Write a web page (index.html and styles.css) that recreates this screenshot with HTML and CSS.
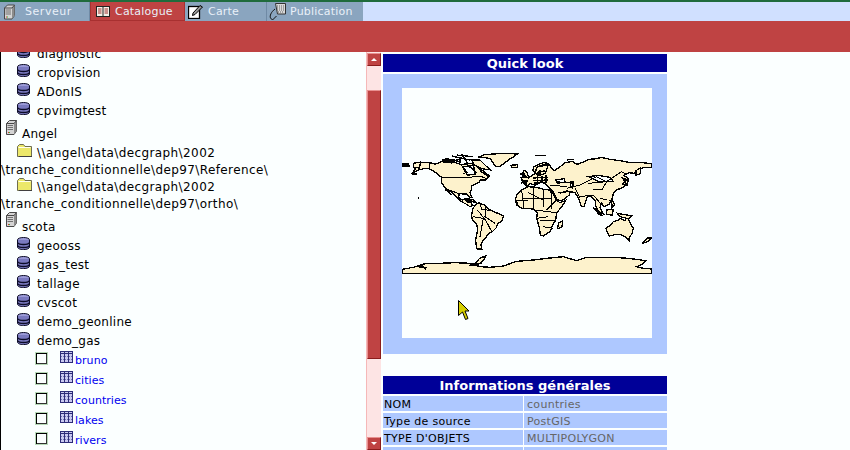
FILE: index.html
```html
<!DOCTYPE html>
<html lang="fr">
<head>
<meta charset="utf-8">
<title>Catalogue</title>
<link rel="stylesheet" href="styles.css">
</head>
<body>
<svg class="defs" width="0" height="0">
  <symbol id="db" viewBox="0 0 13 13">
    <ellipse cx="6.5" cy="2.8" rx="6" ry="2.3" fill="#9a9ad8" stroke="#0c0c28"/>
    <path d="M.5 3v7c0 1.500 2.600 2.600 6 2.600s6-1.100 6-2.600V3" fill="#7a7ac0" stroke="#0c0c28"/>
    <path d="M.5 5.500c1 1.500 3 2 6 2s5-.5 6-2M.5 8.500c1 1.500 3 2 6 2s5-.5 6-2" fill="none" stroke="#0c0c28" stroke-width="1.300"/>
  </symbol>
  <symbol id="server" viewBox="0 0 11 15">
    <path d="M.5 3.500L3.500.5h7v10.500L8 14.500H.5z" fill="#d4d4d4" stroke="#484848"/>
    <path d="M8 3.500v11l2.500-3.500V.5z" fill="#8c8c8c"/>
    <path d="M.5 3.500h7.500l2.500-3" fill="none" stroke="#484848"/>
    <path d="M1.500 5.500h5.500M1.500 7.500h5.500M1.500 9.500h5.500" stroke="#707070"/>
    <path d="M2 12.500h1" stroke="#e03030"/>
    <path d="M3 12.500h1" stroke="#30c030"/>
  </symbol>
  <symbol id="folder" viewBox="0 0 15 13">
    <path d="M.5 12.500V2.500l2-2h4l1.500 2h6.500v10z" fill="#ece86a" stroke="#6e6e50"/>
    <path d="M1.500 3.500h12" stroke="#fffff0"/>
    <path d="M2 12.500h13.500" stroke="#404040"/>
  </symbol>
  <symbol id="table" viewBox="0 0 13 12">
    <rect x=".5" y=".5" width="12" height="11" fill="#c8c8f0" stroke="#2c2c78"/>
    <path d="M.5 2.500h12M4.500 .5v11M8.500 .5v11" stroke="#2c2c78"/>
    <path d="M1 5.500h11M1 8.500h11" stroke="#7070b0" stroke-dasharray="1 1"/>
  </symbol>
</svg>

<div class="topline"></div>
<nav class="tabs">
  <a class="tab tab-serveur">
    <svg class="tab-icon" width="11" height="16"><use href="#server"/></svg>
    <span>Serveur</span>
  </a>
  <a class="tab tab-catalogue active">
    <svg class="tab-icon" width="14" height="11" viewBox="0 0 14 11">
      <rect x=".5" y=".5" width="13" height="10" fill="#f4f0e8" stroke="#222"/>
      <path d="M7 .5v10" stroke="#222"/>
      <path d="M2 3h3.500M2 5h3.500M2 7h3.500M8.500 3h3.500M8.500 5h3.500M8.500 7h3.500" stroke="#a03030"/>
    </svg>
    <span>Catalogue</span>
  </a>
  <a class="tab tab-carte">
    <svg class="tab-icon" width="16" height="15" viewBox="0 0 16 15">
      <rect x=".5" y="2.500" width="11" height="12" fill="#fff" stroke="#000" stroke-width="1.300"/>
      <path d="M5 9l7-7.500 2.500 1.500-7.500 7.500-2.500 1z" fill="#999" stroke="#000"/>
    </svg>
    <span>Carte</span>
  </a>
  <a class="tab tab-pub">
    <svg class="tab-icon" width="17" height="18" viewBox="0 0 17 18">
      <path d="M6.500.5h10v10.500h-8z" fill="#d8d8d8" stroke="#333"/>
      <path d="M8 3h7M8 5h7M8 7h7M9 9h6" stroke="#666" stroke-dasharray="1 1"/>
      <path d="M6 6C2 9 .5 13 1.500 15l2 2 4-4" fill="none" stroke="#111"/>
    </svg>
    <span>Publication</span>
  </a>
  <div class="tabs-rest"></div>
</nav>
<div class="redbar"></div>

<main class="main">
  <section class="tree">
    <div class="tree-inner">
      <div class="row db"><svg class="ic-db" width="13" height="13"><use href="#db"/></svg><span>diagnostic</span></div>
      <div class="row db"><svg class="ic-db" width="13" height="13"><use href="#db"/></svg><span>cropvision</span></div>
      <div class="row db"><svg class="ic-db" width="13" height="13"><use href="#db"/></svg><span>ADonIS</span></div>
      <div class="row db"><svg class="ic-db" width="13" height="13"><use href="#db"/></svg><span>cpvimgtest</span></div>
      <div class="row srv srv-a"><svg class="ic-srv" width="11" height="15"><use href="#server"/></svg><span>Angel</span></div>
      <div class="path"><svg class="ic-folder" width="15" height="13"><use href="#folder"/></svg>\\angel\data\decgraph\2002<br>\tranche_conditionnelle\dep97\Reference\</div>
      <div class="path"><svg class="ic-folder" width="15" height="13"><use href="#folder"/></svg>\\angel\data\decgraph\2002<br>\tranche_conditionnelle\dep97\ortho\</div>
      <div class="row srv srv-s"><svg class="ic-srv" width="11" height="15"><use href="#server"/></svg><span>scota</span></div>
      <div class="row db"><svg class="ic-db" width="13" height="13"><use href="#db"/></svg><span>geooss</span></div>
      <div class="row db"><svg class="ic-db" width="13" height="13"><use href="#db"/></svg><span>gas_test</span></div>
      <div class="row db"><svg class="ic-db" width="13" height="13"><use href="#db"/></svg><span>tallage</span></div>
      <div class="row db"><svg class="ic-db" width="13" height="13"><use href="#db"/></svg><span>cvscot</span></div>
      <div class="row db"><svg class="ic-db" width="13" height="13"><use href="#db"/></svg><span>demo_geonline</span></div>
      <div class="row db"><svg class="ic-db" width="13" height="13"><use href="#db"/></svg><span>demo_gas</span></div>
      <div class="row layer"><span class="check"></span><svg class="ic-table" width="13" height="12"><use href="#table"/></svg><a class="layer-link">bruno</a></div>
      <div class="row layer"><span class="check"></span><svg class="ic-table" width="13" height="12"><use href="#table"/></svg><a class="layer-link">cities</a></div>
      <div class="row layer"><span class="check"></span><svg class="ic-table" width="13" height="12"><use href="#table"/></svg><a class="layer-link">countries</a></div>
      <div class="row layer"><span class="check"></span><svg class="ic-table" width="13" height="12"><use href="#table"/></svg><a class="layer-link">lakes</a></div>
      <div class="row layer"><span class="check"></span><svg class="ic-table" width="13" height="12"><use href="#table"/></svg><a class="layer-link">rivers</a></div>
    </div>
  </section>

  <div class="scrollbar">
    <div class="sb-btn"><span class="arrow-up"></span></div>
    <div class="sb-track"><div class="sb-thumb"></div></div>
    <div class="sb-btn"><span class="arrow-down"></span></div>
  </div>

  <section class="details">
    <h2 class="head">Quick look</h2>
    <div class="look">
      <div class="map">
        <svg class="world" width="250" height="250" viewBox="66 -186 750 750">
          <g class="land">
            <path d="M100 40L125 37 148 38 165 42 180 38 190 30 205 38 222 36 245 45 262 40 280 42 292 50 300 58 312 64 320 72 330 78 322 84 316 90 302 90 296 98 288 102 274 108 274 120 270 128 276 142 268 142 260 132 248 132 238 130 236 142 246 150 258 146 262 156 272 156 278 166 270 170 258 162 246 156 236 148 226 136 214 126 200 118 190 106 184 96 185 82 172 72 160 62 145 56 130 56 110 62 94 72 106 58 100 50Z"/>
            <path d="M278 178L285 166 296 158 310 164 318 168 325 176 335 182 348 188 360 192 371 198 366 212 352 222 350 232 338 244 325 252 318 262 308 272 303 284 306 298 292 298 288 284 287 268 291 250 293 236 290 224 278 210 274 198Z"/>
            <path d="M295 22L312 14 340 12 376 10 412 12 398 22 385 30 370 42 358 50 345 48 338 36 330 26 310 22Z"/>
            <path d="M428 96L424 84 434 82 446 84 456 76 466 70 458 60 462 50 474 44 490 38 504 40 512 50 522 62 532 56 546 46 556 38 576 34 590 42 606 38 626 28 650 26 664 22 690 28 720 32 750 38 790 38 815 42 815 52 792 52 772 60 762 70 746 68 732 76 746 86 742 100 726 114 708 120 700 130 696 150 686 164 672 170 665 160 660 172 668 190 660 190 648 170 645 150 632 138 622 140 612 170 604 168 596 146 585 128 570 125 568 135 546 152 532 150 520 125 506 112 496 100 482 96 466 106 450 100 440 110Z"/>
            <path d="M406 150L410 135 425 120 445 110 470 112 490 118 510 120 518 128 528 150 540 158 556 152 546 170 530 188 527 210 518 225 510 245 490 258 481 255 478 232 470 205 472 188 462 178 445 175 425 175 410 165Z"/>
            <path d="M678 235L690 226 700 215 715 210 722 205 735 212 742 200 750 218 760 235 756 252 750 258 748 272 738 262 722 254 704 254 688 258 682 248Z"/>
            <path d="M66 358L100 352 135 341 180 340 225 338 270 340 300 350 330 352 370 348 410 334 460 330 500 325 550 320 590 332 620 322 660 322 700 322 745 325 797 332 788 342 770 350 790 355 815 357 815 370 66 370Z"/>
            <path d="M268 347L285 340 298 326 318 317 312 330 300 340Z"/>
            <path d="M533 236L535 220 548 212 546 230Z"/>
            <path d="M787 280L803 264 815 264 804 274Z"/>
            <path d="M768 62L780 54 782 70 768 76Z"/>
            <path d="M432 62L440 64 446 82 428 80Z"/>
            <path d="M392 46L413 44 412 52 396 52Z"/>
            <path d="M66 42L85 42 88 48 66 48Z"/>
            <path d="M100 40L122 36 118 54 100 52Z"/>
            <path d="M262 146L280 150 292 160 272 152Z"/>
            <path d="M640 172L668 198 656 192Z"/>
            <path d="M680 180L700 178 696 196 680 192Z"/>
            <path d="M712 190L756 198 745 206 720 200Z"/>
            <path d="M694 145L704 165 696 174Z"/>
            <path d="M728 102L742 88 742 106Z"/>
            <path d="M276 32L300 30 318 48 332 60 306 56 284 46Z"/>
            <path d="M470 52L490 44 504 46 496 70 478 76 466 70Z"/>
            <path class="water" d="M248 50L280 46 286 72 262 76Z"/>
            <path class="water" d="M528 90L552 86 556 96 532 100Z"/>
            <path class="water" d="M572 96L580 96 578 114 572 110Z"/>
            <path class="water" d="M625 80L655 76 690 82 700 94 660 96Z"/>
          </g>
          <g class="borders">
            <path d="M185 82H270L300 78 318 85M198 117L240 132M148 38V58M245 46L262 68 248 70M190 30L215 40"/>
            <path d="M292 180L318 212 335 245M318 168L315 200 345 220M278 200L310 205 300 260M300 160L305 178 335 182"/>
            <path d="M425 120L432 174M460 110L460 178M490 118L490 172M515 124L515 178M425 145H515M465 180L530 188M478 210L525 212M488 230L520 235M530 150L500 180M445 128L490 150M406 150L445 152M470 205L505 200"/>
            <path d="M510 105L560 110M560 115L600 105 610 100 650 80 680 95 725 65 742 75M625 100L680 95 665 120 640 118M600 140L640 135M585 115L600 145M640 135L665 165M660 145L680 150M540 130L565 120M530 95L580 100M570 125L535 128"/>
          </g>
          <g class="dense">
            <path d="M185 30H225M195 25L240 35M230 15L280 20M245 12L262 38M262 28L300 30M255 40L275 55M205 35L240 28M215 18L270 30M240 22V40M190 36H215"/>
            <path d="M270 48L290 70M300 62L325 80M195 118L215 135M255 150L285 155"/>
            <path d="M470 70L495 62M480 50L505 42M428 66L440 82M510 125L518 130M460 178L475 190M424 100L440 90M420 72H436"/>
            <path d="M640 175L675 195M690 150L700 170M725 80L740 105M466 17H498M560 30L582 28M590 44L605 38M96 72H110M735 85V100"/>
            <path d="M280 345L305 340M110 350L140 352M335 350H355M120 342L138 358"/>
            <path d="M408 150L414 168M744 266L750 272M290 296H304M116 142V146"/>
            <path d="M458 84L504 82M460 92L504 90M462 99L500 98M472 76V100M486 78V100M498 76V98"/>
          </g>
          <path class="mass" d="M476 60L484 58 482 76 474 76Z"/>
          <path class="mass" d="M425 92L444 90 440 108 428 102Z"/>
          <path class="outline" d="M66 370H815V357"/>
        </svg>
        <svg class="cursor" width="12" height="20" viewBox="0 0 12 20">
          <path d="M.5.5L11 11H7L10 18.500 7.500 19.500 4.500 12 .5 15.500Z" fill="#d6cf00" stroke="#000"/>
        </svg>
      </div>
    </div>

    <h2 class="head head-info">Informations générales</h2>
    <div class="info">
      <div class="cell">NOM</div><div class="cell val">countries</div>
      <div class="cell">Type de source</div><div class="cell val">PostGIS</div>
      <div class="cell">TYPE D'OBJETS</div><div class="cell val">MULTIPOLYGON</div>
      <div class="cell"></div><div class="cell val"></div>
    </div>
  </section>
</main>
</body>
</html>
```
FILE: styles.css
```css
* { box-sizing: border-box; }
html, body { margin: 0; padding: 0; }
body {
  width: 850px;
  height: 450px;
  overflow: hidden;
  background: #fbffff;
  font-family: "DejaVu Sans", Verdana, sans-serif;
  font-size: 12px;
  color: #000;
  display: flex;
  flex-direction: column;
}
.defs { position: absolute; }

.topline { height: 2px; background: #1f6b3c; flex: none; }
.tabs { height: 19px; display: flex; flex: none; background: #d0e0ff; }
.tab {
  display: flex;
  align-items: center;
  color: #e9f0f8;
  background: #8aa5bf;
  font-size: 11px;
  letter-spacing: .2px;
  border-right: 1px solid #6f8aa5;
}
.tab.active { background: #bf4343; border: 1px solid #a83030; border-top: 0; }
.tab-serveur { width: 90px; padding-left: 4px; letter-spacing: .55px; }
.tab-catalogue { width: 95px; padding-left: 5px; }
.tab-carte { width: 82px; padding-left: 3px; }
.tab-pub { width: 96px; padding-left: 2px; border-right: 0; }
.tab-serveur .tab-icon { margin-right: 10px; }
.tab-catalogue .tab-icon { margin-right: 5px; }
.tab-carte .tab-icon { margin-right: 4px; }
.tab-pub .tab-icon { margin-right: 4px; }
.tabs-rest { flex: 1; }

.redbar { height: 31px; background: #bf4343; flex: none; }

.main { flex: 1; display: flex; min-height: 0; }
.tree {
  width: 366px;
  flex: none;
  overflow: hidden;
  border-left: 1px solid #000;
  letter-spacing: .25px;
}
.tree-inner { margin-top: -8px; }

.row { display: flex; }
.row span, .row a { line-height: 1; }
.db { height: 18.86px; padding-left: 16px; align-items: center; }
.db span { padding-top: 2px; }
.ic-db { margin-top: -3px; margin-right: 7px; flex: none; }
.srv { padding-left: 5px; align-items: flex-end; }
.srv-a { height: 24px; padding-bottom: 3px; }
.srv-s { height: 24.5px; padding-bottom: 3px; }
.ic-srv { margin-right: 5px; flex: none; align-self: flex-start; margin-top: .5px; }
.path { height: 34px; line-height: 17px; white-space: nowrap; padding-top: 1px; letter-spacing: .4px; }
.ic-folder { margin-left: 16px; margin-right: 5px; vertical-align: 0; }
.layer { height: 20px; padding-left: 34px; align-items: center; font-size: 11px; letter-spacing: .05px; }
.layer .layer-link { color: #0000f0; padding-top: 2px; padding-left: 1px; }
.check {
  width: 13px;
  height: 13px;
  flex: none;
  margin-top: -2px;
  background: #fbffff;
  border: 1px solid #b8dab8;
  box-shadow: inset 1px 1px 0 #000, inset -1px -1px 0 #333;
}
.ic-table { margin-left: 12px; margin-right: 1px; margin-top: -5px; flex: none; }

.scrollbar {
  width: 15px;
  flex: none;
  display: flex;
  flex-direction: column;
  padding-top: 1px;
  background: #fde4e4;
  border-left: 1px solid #f5b8b8;
}
.sb-btn {
  height: 13px;
  width: 14px;
  flex: none;
  background: #bf4343;
  border: 1px solid #8a1c1c;
  border-top-color: #e89090;
  border-left-color: #e89090;
  display: flex;
  align-items: center;
  justify-content: center;
}
.sb-track { flex: 1; padding-top: 24px; }
.sb-thumb {
  width: 14px;
  height: 269px;
  background: #bf4343;
  border: 1px solid #8a1c1c;
  border-top-color: #e89090;
  border-left-color: #e89090;
}
.arrow-up, .arrow-down { width: 0; height: 0; border: 3px solid transparent; }
.arrow-up { border-bottom-color: #fff; border-top-width: 0; }
.arrow-down { border-top-color: #fff; border-bottom-width: 0; }

.details { width: 284px; flex: none; margin-left: 2px; padding-top: 2px; }
.head {
  margin: 0;
  height: 18px;
  background: #000098;
  color: #fff;
  font-size: 13px;
  line-height: 20px;
  font-weight: bold;
  text-align: center;
}
.look {
  margin-top: 2px;
  height: 280px;
  padding: 14px 15px 16px 19px;
  background: #aec8ff;
}
.map { width: 250px; height: 250px; background: #fbffff; position: relative; }
.world { display: block; shape-rendering: crispEdges; }
.land path { fill: #fdf2cc; stroke: #000; stroke-width: 4; }
.land .water { fill: #fbffff; }
.borders path { fill: none; stroke: #000; stroke-width: 3; }
.dense path { fill: none; stroke: #000; stroke-width: 4; }
.mass { fill: #000; }
.outline { fill: none; stroke: #000; stroke-width: 4; }
.cursor { position: absolute; left: 56px; top: 212px; }

.head-info { margin-top: 22px; }
.info {
  margin-top: 2px;
  display: grid;
  grid-template-columns: 140px 143px;
  column-gap: 1px;
  row-gap: 2px;
  grid-auto-rows: 15px;
}
.cell {
  background: #aec8ff;
  font-size: 11px;
  line-height: 17px;
  padding-left: 1px;
  letter-spacing: .3px;
  white-space: nowrap;
  overflow: hidden;
}
.val { color: #666; padding-left: 3px; }
```
